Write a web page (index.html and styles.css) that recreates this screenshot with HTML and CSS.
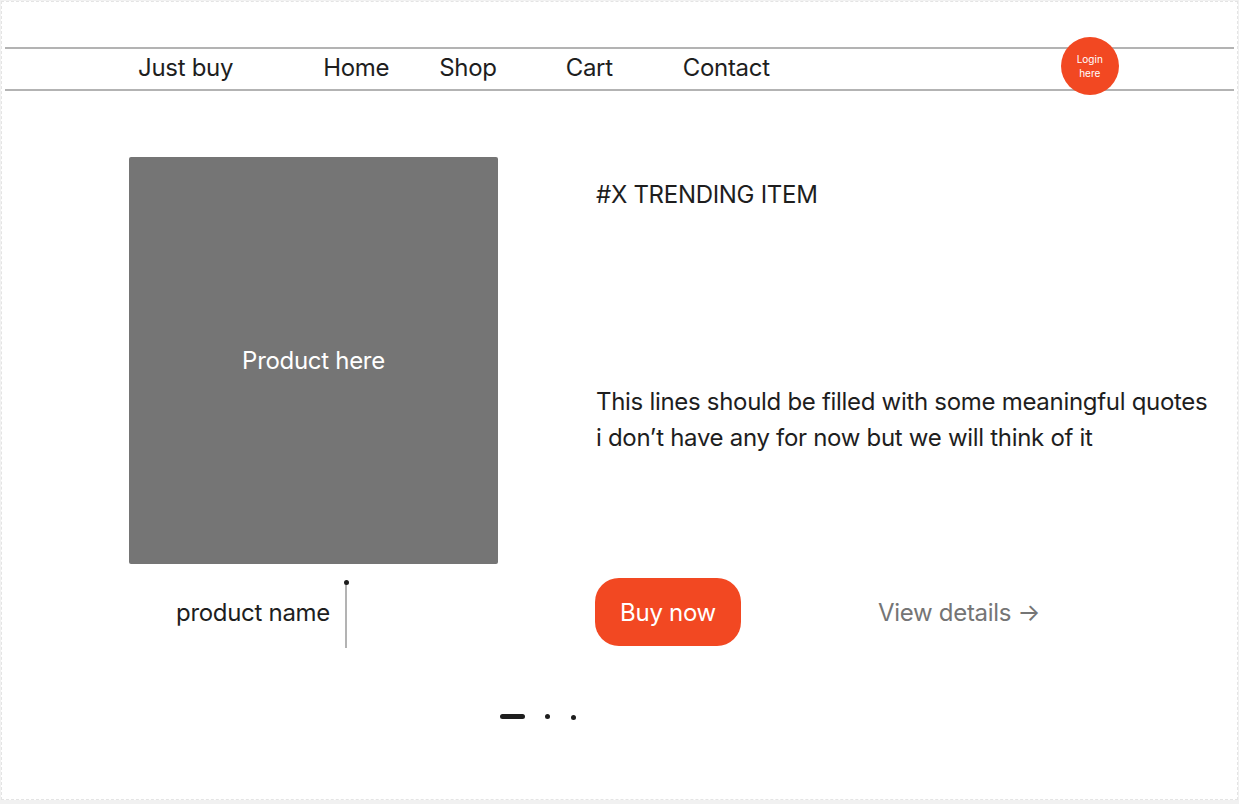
FILE: index.html
```html
<!DOCTYPE html>
<html lang="en">
<head>
<meta charset="utf-8">
<title>Just buy</title>
<link rel="stylesheet" href="styles.css">
</head>
<body>
<div class="frame">
  <nav class="nav">
    <span class="brand">Just buy</span>
    <a class="nav-link home">Home</a>
    <a class="nav-link shop">Shop</a>
    <a class="nav-link cart">Cart</a>
    <a class="nav-link contact">Contact</a>
    <a class="login">Login<br>here</a>
  </nav>
  <main class="hero">
    <div class="product-box">Product here</div>
    <div class="info">
      <h2 class="tag">#X TRENDING ITEM</h2>
      <p class="quote">This lines should be filled with some meaningful quotes<br>i don’t have any for now but we will think of it</p>
    </div>
    <div class="name-row">
      <span class="product-name">product name</span>
      <span class="cursor"></span>
    </div>
    <div class="actions">
      <button class="buy">Buy now</button>
      <a class="details">View details →</a>
    </div>
  </main>
  <div class="pager">
    <span class="dash"></span>
    <span class="dot"></span>
    <span class="dot low"></span>
  </div>
</div>
</body>
</html>
```
FILE: styles.css
```css
* { box-sizing: border-box; }
html, body { margin: 0; padding: 0; }
body {
  background: #f1f1f1;
  font-family: Inter, "Noto Sans", sans-serif;
  color: #1e1e1e;
  letter-spacing: -0.3px;
  width: 1239px;
  height: 804px;
  overflow: hidden;
}
.frame {
  width: 1237px;
  height: 799px;
  margin-left: 1px;
  margin-top: 1px;
  background: #fff;
  border: 1px dashed #e4e4e4;
  padding-top: 45px;
}
.nav {
  display: flex;
  align-items: center;
  height: 44px;
  margin: 0 3px 0 3px;
  border-top: 2px solid #b3b3b3;
  border-bottom: 2px solid #b3b3b3;
  padding-left: 133px;
  padding-bottom: 3px;
  font-size: 24px;
}
.brand { margin-right: 90px; }
.nav-link { color: #1e1e1e; text-decoration: none; }
.home { margin-right: 50px; }
.shop { margin-right: 69px; }
.cart { margin-right: 70px; }
.contact { margin-right: 291px; }
.login {
  align-self: flex-start;
  margin-top: -12px;
  width: 58px;
  height: 58px;
  flex: none;
  border-radius: 50%;
  background: #f24822;
  color: #fff;
  font-size: 10px;
  line-height: 14px;
  letter-spacing: 0;
  display: flex;
  align-items: center;
  justify-content: center;
  text-align: center;
}
.hero {
  display: grid;
  grid-template-columns: 369px 1fr;
  grid-template-rows: 407px 68px;
  column-gap: 98px;
  row-gap: 14px;
  padding-left: 127px;
  margin-top: 66px;
}
.product-box {
  background: #757575;
  border-radius: 2px;
  color: #fff;
  font-size: 24px;
  display: flex;
  align-items: center;
  justify-content: center;
}
.info { padding-top: 23px; }
.tag {
  margin: 0;
  font-size: 24px;
  font-weight: 400;
  line-height: normal;
}
.quote {
  margin: 175px 0 0;
  font-size: 24px;
  line-height: 36px;
}
.name-row {
  display: flex;
  align-items: center;
  height: 68px;
  padding-left: 47px;
  gap: 15px;
}
.product-name { font-size: 24px; }
.cursor {
  position: relative;
  align-self: flex-start;
  width: 2px;
  height: 66px;
  margin-top: 4px;
  background: #b3b3b3;
}
.cursor::before {
  content: "";
  position: absolute;
  left: -1.5px;
  top: -2px;
  width: 5px;
  height: 5px;
  border-radius: 50%;
  background: #1e1e1e;
}
.actions {
  display: flex;
  align-items: center;
  gap: 137px;
  margin-left: -1px;
}
.buy {
  width: 146px;
  height: 68px;
  border: none;
  border-radius: 24px;
  background: #f24822;
  color: #fff;
  font-family: inherit;
  letter-spacing: inherit;
  font-size: 24px;
  padding: 0;
}
.details {
  color: #757575;
  font-size: 24px;
}
.pager {
  display: flex;
  align-items: center;
  gap: 20px;
  padding-left: 498px;
  margin-top: 67px;
}
.dash {
  width: 25px;
  height: 5px;
  border-radius: 2.5px;
  background: #1e1e1e;
}
.dot {
  width: 5px;
  height: 5px;
  border-radius: 50%;
  background: #1e1e1e;
}
.dot.low { margin-top: 2px; margin-left: 1px; }
```
